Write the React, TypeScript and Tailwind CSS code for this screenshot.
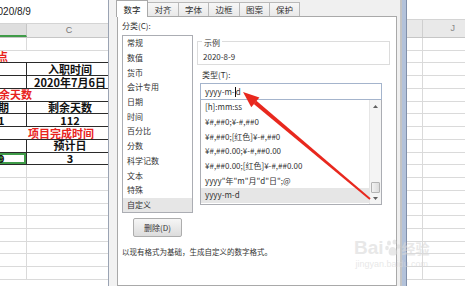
import type { ReactNode } from 'react'

type SheetRow = {
  b?: ReactNode
  c?: ReactNode
  full?: ReactNode
  fullClass?: string
  dark?: boolean
  sel?: boolean
}

const leftRows: SheetRow[] = [
  {},
  { full: '点', fullClass: '-ml-[3px] text-[#e8231d]', dark: true },
  { c: '入职时间', dark: true },
  { c: '2020年7月6日', dark: true },
  { full: '余天数', fullClass: '-ml-[1px] text-[#e8231d]', dark: true },
  { b: '期', c: '剩余天数', dark: true },
  { b: '1', c: '112', dark: true },
  { full: '项目完成时间', fullClass: 'pl-[28px] text-[#e8231d]', dark: true },
  { c: '预计日', dark: true },
  { b: '9', c: '3', dark: true, sel: true },
  {}, {}, {}, {}, {}, {}, {}, {}, {},
]

const categories = ['常规', '数值', '货币', '会计专用', '日期', '时间', '百分比', '分数', '科学记数', '文本', '特殊', '自定义']

const formats = [
  '[h]:mm:ss',
  '¥#,##0;¥-#,##0',
  '¥#,##0;[红色]¥-#,##0',
  '¥#,##0.00;¥-#,##0.00',
  '¥#,##0.00;[红色]¥-#,##0.00',
  'yyyy"年"m"月"d"日";@',
  'yyyy-m-d',
]

const tabs = [
  { label: '数字', w: 'w-[32px]' },
  { label: '对齐', w: 'w-[31px]' },
  { label: '字体', w: 'w-[30px]' },
  { label: '边框', w: 'w-[31px]' },
  { label: '图案', w: 'w-[30px]' },
  { label: '保护', w: 'w-[30px]' },
]

function LeftSheet() {
  return (
    <div className="flex w-[108px] shrink-0 flex-col overflow-hidden bg-white">
      <div className="flex h-[24px] items-center border-b border-[#d4d4d4] text-[10px] text-[#222]">
        <span className="-ml-[8px] font-['Liberation_Sans',sans-serif]">2020/8/9</span>
      </div>
      <div className="flex h-[14px] border-b border-[#c6c6c6] bg-[#ebebeb]">
        <div className="w-[27px] border-r border-[#c6c6c6] border-b-2 border-b-[#3f9b48] bg-[#dedede]" />
        <div className="flex flex-1 items-center justify-center pl-[3px] text-[9px] text-[#777] font-['Liberation_Sans',sans-serif]">
          C
        </div>
      </div>
      {leftRows.map((r, i) => (
        <div
          key={i}
          className={`flex h-[12.74px] shrink-0 border-b text-[11px] font-bold leading-none text-[#111] ${r.dark ? 'border-[#2a2a2a]' : 'border-[#dadada]'}`}
        >
          {r.full ? (
            <div className={`flex flex-1 items-center whitespace-nowrap ${r.fullClass}`}>{r.full}</div>
          ) : (
            <>
              <div
                className={`flex w-[27px] items-center border-r ${r.dark ? 'border-[#2a2a2a]' : 'border-[#dadada]'} ${r.sel ? 'shadow-[inset_0_0_0_2px_#3f9b48]' : ''}`}
              >
                <span className="-ml-[2px]">{r.b}</span>
              </div>
              <div className="flex flex-1 items-center justify-center whitespace-nowrap pl-[5px]">{r.c}</div>
            </>
          )}
        </div>
      ))}
    </div>
  )
}

function RightSheet() {
  return (
    <div className="flex w-[58px] shrink-0 flex-col bg-white">
      <div className="h-[20px] border-b border-[#d4d4d4] bg-white" />
      <div className="flex h-[18px] border-b border-[#c6c6c6] bg-[#e9e9e9]">
        <div className="w-[16px] border-r border-[#cfcfcf]" />
        <div className="flex flex-1 items-end justify-end pb-[2px] pr-[10px] text-[9px] text-[#888] font-['Liberation_Sans',sans-serif]">
          J
        </div>
      </div>
      {Array.from({ length: 19 }).map((_, i) => (
        <div key={i} className="flex h-[12.74px] shrink-0 border-b border-[#dadada]">
          <div className="w-[16px] border-r border-[#dadada]" />
          <div className="flex-1" />
        </div>
      ))}
    </div>
  )
}

function Arrow() {
  return (
    <svg className="pointer-events-none absolute left-0 top-0" width="465" height="286" viewBox="0 0 465 286">
      <polygon points="370.6,198.3 369.4,199.8 253.8,103.9 256.4,100.7" fill="#e8281e" />
      <polygon points="243,92 259.4,97.5 251.3,107.2" fill="#e8281e" />
    </svg>
  )
}

function Watermark() {
  return (
    <div className="pointer-events-none absolute left-[354px] top-[238px] flex flex-col items-center text-[#d9d9d9] opacity-60">
      <div className="flex items-center gap-[1px]">
        <span className="text-[19px] font-bold leading-none font-['Liberation_Sans',sans-serif]">Bai</span>
        <svg width="16" height="18" viewBox="0 0 16 18">
          <ellipse cx="4" cy="4" rx="2" ry="2.6" fill="#d9d9d9" />
          <ellipse cx="9.5" cy="3" rx="2" ry="2.6" fill="#d9d9d9" />
          <ellipse cx="2" cy="9" rx="1.8" ry="2.2" fill="#d9d9d9" />
          <ellipse cx="13.5" cy="7.5" rx="1.8" ry="2.2" fill="#d9d9d9" />
          <path d="M7.5 8 C4 8 3 13 4 15 C5 17 10 17 12 15 C13 13 11 8 7.5 8 Z" fill="#d9d9d9" />
        </svg>
        <span className="text-[14px] font-bold leading-none">经验</span>
      </div>
      <span className="mt-[3px] text-[9px] leading-none font-['Liberation_Sans',sans-serif]">jingyan.baidu.com</span>
    </div>
  )
}

function FormatDialog() {
  return (
    <div className="flex w-[299px] shrink-0 bg-[#f0f0f0]">
      <div className="w-[9px] border-l border-[#9aa3b3] bg-[#f2f2f2]" />
      <div className="flex w-[280px] flex-col">
        <div className="relative z-10 -ml-[1px] flex h-[16px] items-end">
          {tabs.map((t, i) =>
            i === 0 ? (
              <div
                key={t.label}
                className={`${t.w} -mb-[1px] flex h-[17px] items-center justify-center border border-b-0 border-[#a9a9a9] bg-white text-[8.5px] text-[#222]`}
              >
                {t.label}
              </div>
            ) : (
              <div
                key={t.label}
                className={`${t.w} flex h-[14px] items-center justify-center border border-b-0 border-l-0 border-[#b9b9b9] bg-gradient-to-b from-[#f7f7f7] to-[#e9e9e9] text-[8.5px] text-[#333]`}
              >
                {t.label}
              </div>
            ),
          )}
        </div>
        <div className="flex flex-1 flex-col border border-[#a9a9a9] bg-white pl-[4px] pt-[4px] text-[8px] text-[#333]">
          <div className="flex gap-[4px]">
            <div className="flex w-[71px] flex-col">
              <div className="h-[10px] leading-[10px]">分类(C):</div>
              <div className="mt-[4px] flex h-[178px] flex-col border border-[#abadb3]">
                {categories.map((c, i) => (
                  <div
                    key={c}
                    className={`flex h-[14.7px] shrink-0 items-center pl-[4px] ${i === categories.length - 1 ? 'bg-[#e6e6e6]' : ''}`}
                  >
                    {c}
                  </div>
                ))}
              </div>
              <div className="mx-auto mt-[5px] flex h-[19px] w-[49px] items-center justify-center rounded-[2px] border border-[#adadad] bg-gradient-to-b from-[#f6f6f6] to-[#dcdcdc]">
                删除(D)
              </div>
            </div>
            <div className="flex w-[193px] flex-col">
              <div className="mt-[20px] flex h-[24px] flex-col border border-[#dcdcdc]">
                <span className="-mt-[4px] ml-[4px] w-fit bg-white px-[2px] leading-[10px]">示例</span>
                <span className="ml-[5px] mt-[4px] leading-[10px]">2020-8-9</span>
              </div>
              <div className="ml-[5px] mt-[5px] leading-[10px]">类型(T):</div>
              <div className="ml-[3px] mt-[3px] flex h-[17px] w-[182px] items-center border border-[#a4b4cc] pl-[4px]">
                <span>yyyy-m-</span>
                <span className="inline-block h-[10px] w-px bg-[#111]" />
                <span>d</span>
              </div>
              <div className="ml-[3px] flex h-[105px] w-[182px] border border-t-0 border-[#abadb3]">
                <div className="flex flex-1 flex-col">
                  {formats.map((f, i) => (
                    <div
                      key={f}
                      className={`flex h-[14.7px] shrink-0 items-center whitespace-nowrap pl-[4px] ${i === formats.length - 1 ? 'bg-[#e6e6e6]' : ''}`}
                    >
                      {f}
                    </div>
                  ))}
                </div>
                <div className="flex w-[12px] flex-col border-l border-[#e6e6e6] bg-[#f4f4f4]">
                  <div className="flex h-[12px] items-center justify-center">
                    <svg width="5" height="3" viewBox="0 0 5 3">
                      <path d="M0 3 L2.5 0 L5 3 Z" fill="#606060" />
                    </svg>
                  </div>
                  <div className="flex-1" />
                  <div className="mx-[1px] h-[11px] rounded-[1px] border border-[#b3b3b3] bg-gradient-to-r from-[#f2f2f2] to-[#dcdcdc]" />
                  <div className="flex h-[11px] items-center justify-center">
                    <svg width="5" height="3" viewBox="0 0 5 3">
                      <path d="M0 0 L2.5 3 L5 0 Z" fill="#606060" />
                    </svg>
                  </div>
                </div>
              </div>
            </div>
          </div>
          <div className="mt-[10px] whitespace-nowrap text-[7.5px] leading-[10px]">
            以现有格式为基础，生成自定义的数字格式。
          </div>
        </div>
      </div>
      <div className="w-[3px] bg-[#f0f0f0]" />
      <div className="w-[2px] bg-[#c4c4c4]" />
      <div className="w-[5px] border-r border-[#8190aa] bg-[#b3c2da]" />
    </div>
  )
}

export default function App() {
  return (
    <div className="relative flex h-[286px] w-[465px] overflow-hidden bg-white font-['Noto_Sans_CJK_SC',sans-serif]">
      <LeftSheet />
      <FormatDialog />
      <RightSheet />
      <Watermark />
      <Arrow />
    </div>
  )
}
